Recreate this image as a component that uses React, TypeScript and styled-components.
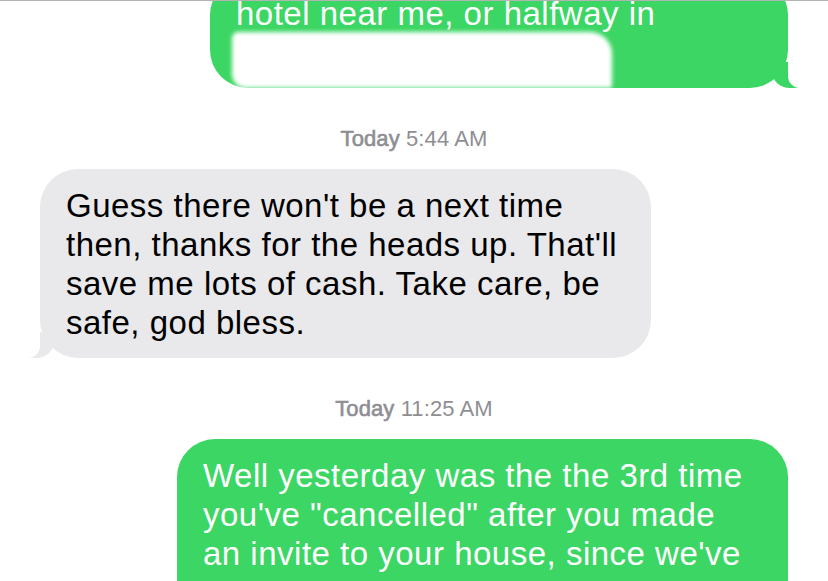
import React from "react";
import styled, { createGlobalStyle, css } from "styled-components";

const GlobalStyle = createGlobalStyle`
  html, body {
    margin: 0;
    padding: 0;
    background: #ffffff;
  }
  body {
    font-family: "Liberation Sans", Arial, sans-serif;
    -webkit-font-smoothing: antialiased;
  }
`;

const GREEN = "#3bd663";
const GRAY = "#e9e9eb";

const Screen = styled.div`
  width: 828px;
  height: 581px;
  overflow: hidden;
  background: #ffffff;
  border-top: 1px solid #b3b3b3;
  box-sizing: border-box;
`;

const Thread = styled.div`
  display: flex;
  flex-direction: column;
  margin-top: -24px;
`;

const Timestamp = styled.div`
  margin: 38px 0 17px;
  text-align: center;
  font-size: 22px;
  line-height: 26px;
  color: #8e8e93;
  letter-spacing: 0.1px;
`;

const Day = styled.span`
  font-weight: 400;
  -webkit-text-stroke: 0.6px #8e8e93;
`;

type Side = "me" | "them";

const Bubble = styled.div<{ $side: Side; $width: number; $continues?: boolean }>`
  position: relative;
  box-sizing: border-box;
  width: ${(p) => p.$width}px;
  padding: 17px 26px 16px 26px;
  border-radius: ${(p) => (p.$continues ? "38px 38px 0 0" : "38px")};
  font-size: 33px;
  line-height: 39px;
  letter-spacing: 0.5px;
  white-space: nowrap;

  &::before,
  &::after {
    content: "";
    position: absolute;
    bottom: 0;
    display: ${(p) => (p.$continues ? "none" : "block")};
  }

  ${(p) =>
    p.$side === "me"
      ? css`
          align-self: flex-end;
          margin-right: 40px;
          background: ${GREEN};
          color: #ffffff;
          &::before {
            right: -10px;
            width: 26px;
            height: 26px;
            background: ${GREEN};
            border-bottom-left-radius: 18px 16px;
          }
          &::after {
            right: -30px;
            width: 30px;
            height: 28px;
            background: #ffffff;
            border-bottom-left-radius: 12px;
          }
        `
      : css`
          align-self: flex-start;
          margin-left: 40px;
          background: ${GRAY};
          color: #000000;
          &::before {
            left: -12px;
            width: 26px;
            height: 26px;
            background: ${GRAY};
            border-bottom-right-radius: 18px 16px;
          }
          &::after {
            left: -30px;
            width: 30px;
            height: 28px;
            background: #ffffff;
            border-bottom-right-radius: 12px;
          }
        `}
`;

const Redaction = styled.div`
  position: relative;
  z-index: 1;
  width: 380px;
  height: 56px;
  margin: -1px 0 -16px -4px;
  background: #ffffff;
  border-radius: 6px 22px 2px 14px;
  filter: blur(2px);
`;

const Lines: React.FC<{ lines: string[] }> = ({ lines }) => (
  <>
    {lines.map((l, i) => (
      <React.Fragment key={i}>
        {l}
        {i < lines.length - 1 && <br />}
      </React.Fragment>
    ))}
  </>
);

export default function App() {
  return (
    <>
      <GlobalStyle />
      <Screen>
        <Thread>
          <Bubble $side="me" $width={578}>
            hotel near me, or halfway in
            <Redaction />
          </Bubble>

          <Timestamp>
            <Day>Today</Day> 5:44 AM
          </Timestamp>

          <Bubble $side="them" $width={611}>
            <Lines
              lines={[
                "Guess there won't be a next time",
                "then, thanks for the heads up. That'll",
                "save me lots of cash. Take care, be",
                "safe, god bless.",
              ]}
            />
          </Bubble>

          <Timestamp>
            <Day>Today</Day> 11:25 AM
          </Timestamp>

          <Bubble $side="me" $width={611} $continues>
            <Lines
              lines={[
                "Well yesterday was the the 3rd time",
                "you've \"cancelled\" after you made",
                "an invite to your house, since we've",
              ]}
            />
          </Bubble>
        </Thread>
      </Screen>
    </>
  );
}
